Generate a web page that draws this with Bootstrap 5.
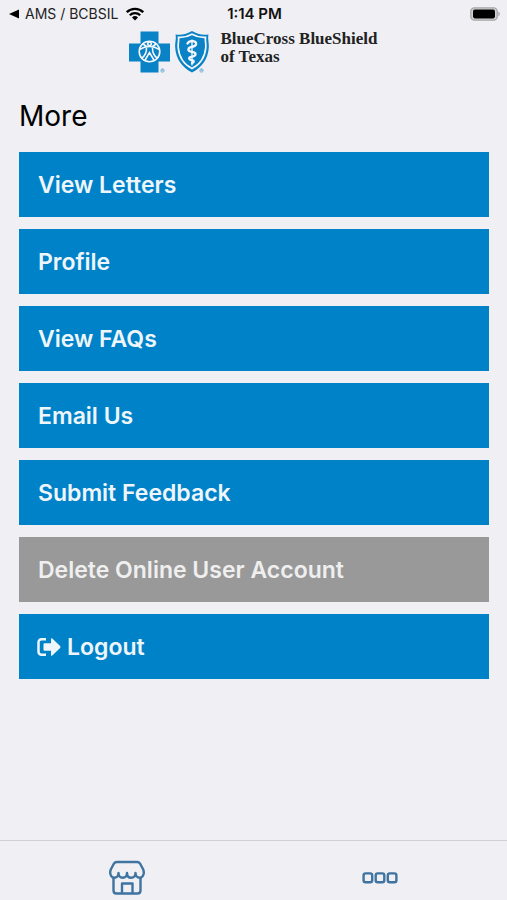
<!DOCTYPE html>
<html lang="en">
<head>
<meta charset="utf-8">
<meta name="viewport" content="width=device-width, initial-scale=1">
<title>More</title>
<link href="https://cdn.jsdelivr.net/npm/bootstrap@5.3.0/dist/css/bootstrap.min.css" rel="stylesheet">
<style>
  body { background: #efeff4; color: #111; font-family: Inter, "Liberation Sans", sans-serif; }
  svg { display: block; flex: none; }
  .status-bar { height: 28px; padding: 0 7px 0 9px; font-size: 14px; line-height: 28px; }
  .status-bar > * { flex: 1 1 0; }
  .status-time { font-size: 15px; }
  .back-link { color: #222; }
  .brand { padding-top: 2px; padding-right: 1px; height: 46px; }
  .brand-name { font-family: "Liberation Serif", serif; font-weight: 700; font-size: 17px; line-height: 18px; color: #222; }
  main { padding: 24px 18px 24px 19px; }
  .page-title { font-size: 28px; line-height: 36px; font-weight: 400; color: #000; margin-bottom: 18px; }
  .menu { gap: 12px; }
  .menu-btn { --bs-btn-color: #eff6fb; --bs-btn-bg: #0082c8; --bs-btn-border-color: #0082c8;
    --bs-btn-hover-color: #fff; --bs-btn-hover-bg: #0074b3; --bs-btn-hover-border-color: #0074b3;
    --bs-btn-font-size: 23px; --bs-btn-font-weight: 600; --bs-btn-line-height: 31px;
    --bs-btn-padding-x: 18px; gap: 6px; padding-top: 17px; padding-bottom: 15px; }
  .menu-btn svg { margin-left: -1px; }
  .menu-btn-muted { --bs-btn-color: #efefef; --bs-btn-bg: #999; --bs-btn-border-color: #999; }
  .tab-bar { border-top: 1px solid #cfcfd4; height: 60px; }
  .tab-bar a { padding-top: 14px; color: #3f73a0; }
</style>
</head>
<body class="d-flex flex-column min-vh-100">
<div class="status-bar d-flex align-items-center">
  <a href="#" class="back-link d-flex align-items-center text-decoration-none text-nowrap">
    <svg class="me-1" width="12" height="10" viewBox="0 0 12 10" fill="#000"><path d="M0 5 10 .5v9z"/></svg>
    AMS / BCBSIL
    <svg class="ms-2" width="18" height="14" viewBox="0 0 18 14" fill="none" stroke="#000" stroke-width="2.3"><path d="M.8 5.2a11.6 11.6 0 0 1 16.4 0M3.800 8.300a7.400 7.400 0 0 1 10.400 0"/><path d="M9 13.600 6 10.500a4.300 4.300 0 0 1 6 0z" fill="#000" stroke="none"/></svg>
  </a>
  <span class="status-time text-center fw-semibold">1:14 PM</span>
  <span class="d-flex justify-content-end">
    <svg width="30" height="14" viewBox="0 0 30 14"><rect x=".8" y=".8" width="26.4" height="12.4" rx="3.6" fill="#d2d2d5" stroke="#a6a6a9" stroke-width="1.3"/><rect x="3" y="2.6" width="22" height="8.8" rx="1.8"/><path d="M28.3 4.8c2 .6 2 3.800 0 4.400z" fill="#a6a6a9"/></svg>
  </span>
</div>
<header class="brand d-flex justify-content-center">
  <svg width="84" height="44" viewBox="0 0 84 44" role="img" aria-label="Cross and shield">
    <path d="M11.500 1.500h18v12H41v18H29.500v11h-18v-11H0v-18h11.500z" fill="#0a82c6"/>
    <g fill="none" stroke="#f4f8fc" stroke-width="1.600">
      <circle cx="20.500" cy="21.500" r="10.300"/>
      <path d="M10.500 19.500c3.500-2.200 6.500-3 10-3s6.500.8 10 3M17.500 17c.3 5.500-.8 8.800-5.300 11.500M23.500 17c-.3 5.500.8 8.800 5.300 11.500M15.800 30.500l4.700-8 4.700 8M14 14l3.500 2.500M27 14l-3.500 2.500"/>
      <circle cx="20.500" cy="13.800" r="1.800"/>
    </g>
    <path d="M46.500 4.500c6 1 11.500-.4 16.500-3.500 5 3.100 10.500 4.500 16.500 3.500-1 4 .6 7.500.3 13C79.300 28.500 73 37.500 63 42.500 53 37.500 46.700 28.500 46.200 17.500c-.3-5.500 1.300-9 .3-13z" fill="#0a82c6"/>
    <path d="M49.500 7.400C54.500 7.700 59 6.600 63 4.300c4 2.300 8.500 3.400 13.500 3.100-.5 3.600.6 6 .3 10.100C76 26.800 71.200 34.300 63 38.600 54.800 34.300 50 26.800 49.200 17.500c-.3-4.100.8-6.500.3-10.100z" fill="none" stroke="#f4f8fc" stroke-width="1.700"/>
    <g fill="none" stroke="#f4f8fc" stroke-linecap="round">
      <path d="M63 10v25" stroke-width="1.300"/>
      <path d="M58.500 13.500q1.500-3 5.500-2.300c4.500.8 3.800 4.500 0 5.300-6 1.200-6 4.500-1 5.300 5 .8 4.500 4 0 4.800-4 .7-3.500 3 0 3.600 2.500.5 2 2.200 0 2.800" stroke-width="2.300"/>
    </g>
    <g fill="none" stroke="#62a8d5" stroke-width=".8"><circle cx="33.500" cy="40.500" r="1.700"/><circle cx="72.500" cy="40.500" r="1.700"/><path d="M33 41.200v-1.400h1v1.400M72 41.200v-1.400h1v1.400"/></g>
  </svg>
  <div class="brand-name ms-2 text-nowrap">BlueCross BlueShield<br>of Texas</div>
</header>
<main class="flex-grow-1">
  <h1 class="page-title">More</h1>
  <div class="menu d-flex flex-column">
    <button type="button" class="btn menu-btn rounded-0 text-start">View Letters</button>
    <button type="button" class="btn menu-btn rounded-0 text-start">Profile</button>
    <button type="button" class="btn menu-btn rounded-0 text-start">View FAQs</button>
    <button type="button" class="btn menu-btn rounded-0 text-start">Email Us</button>
    <button type="button" class="btn menu-btn rounded-0 text-start">Submit Feedback</button>
    <button type="button" class="btn menu-btn menu-btn-muted rounded-0 text-start">Delete Online User Account</button>
    <button type="button" class="btn menu-btn rounded-0 text-start d-flex align-items-center">
      <svg width="24" height="22" viewBox="0 0 24 22"><path d="M9 2.200H4.500A3 3 0 0 0 1.500 5.200v9.600a3 3 0 0 0 3 3H9" fill="none" stroke="currentColor" stroke-width="2.500"/><path d="M6.500 7.300q0-1 1-1H14V2.200q0-1.600 1.300-.6l7.800 7.500q.9.900 0 1.800l-7.800 7.500q-1.300 1-1.300-.6v-4.100H7.500q-1 0-1-1z" fill="currentColor"/></svg>
      Logout
    </button>
  </div>
</main>
<nav class="tab-bar d-flex" aria-label="Main">
  <a href="#" class="flex-fill d-flex justify-content-center" aria-label="Home">
    <svg width="36" height="40" viewBox="0 0 36 40" fill="none" stroke="currentColor" stroke-width="2.400" stroke-linejoin="round" stroke-linecap="round"><path d="M8 7h20q2.200 0 3.200 1.800l3 5.700c1.600 4-.4 8.300-3.400 8.300-2.500 0-4.300-2-4.300-4.800 0 2.800-1.700 4.800-4.300 4.800S18 20.800 18 18c0 2.800-1.700 4.800-4.300 4.800S9.500 20.800 9.500 18c0 2.800-1.800 4.800-4.300 4.800-3 0-5-4.300-3.400-8.300l3-5.700Q5.800 7 8 7z"/><path d="M4.500 23v12.500q0 3 3 3h21q3 0 3-3V23M13 38v-9.500h10.500V38"/></svg>
  </a>
  <a href="#" class="flex-fill d-flex justify-content-center" aria-label="More">
    <svg width="36" height="40" viewBox="0 0 36 40" fill="none" stroke="currentColor" stroke-width="2.400"><rect x="1.600" y="18.400" width="8.600" height="8.800" rx="2"/><rect x="13.700" y="18.400" width="8.600" height="8.800" rx="2"/><rect x="25.800" y="18.400" width="8.600" height="8.800" rx="2"/></svg>
  </a>
</nav>
<script src="https://cdn.jsdelivr.net/npm/bootstrap@5.3.0/dist/js/bootstrap.bundle.min.js"></script>
</body>
</html>
